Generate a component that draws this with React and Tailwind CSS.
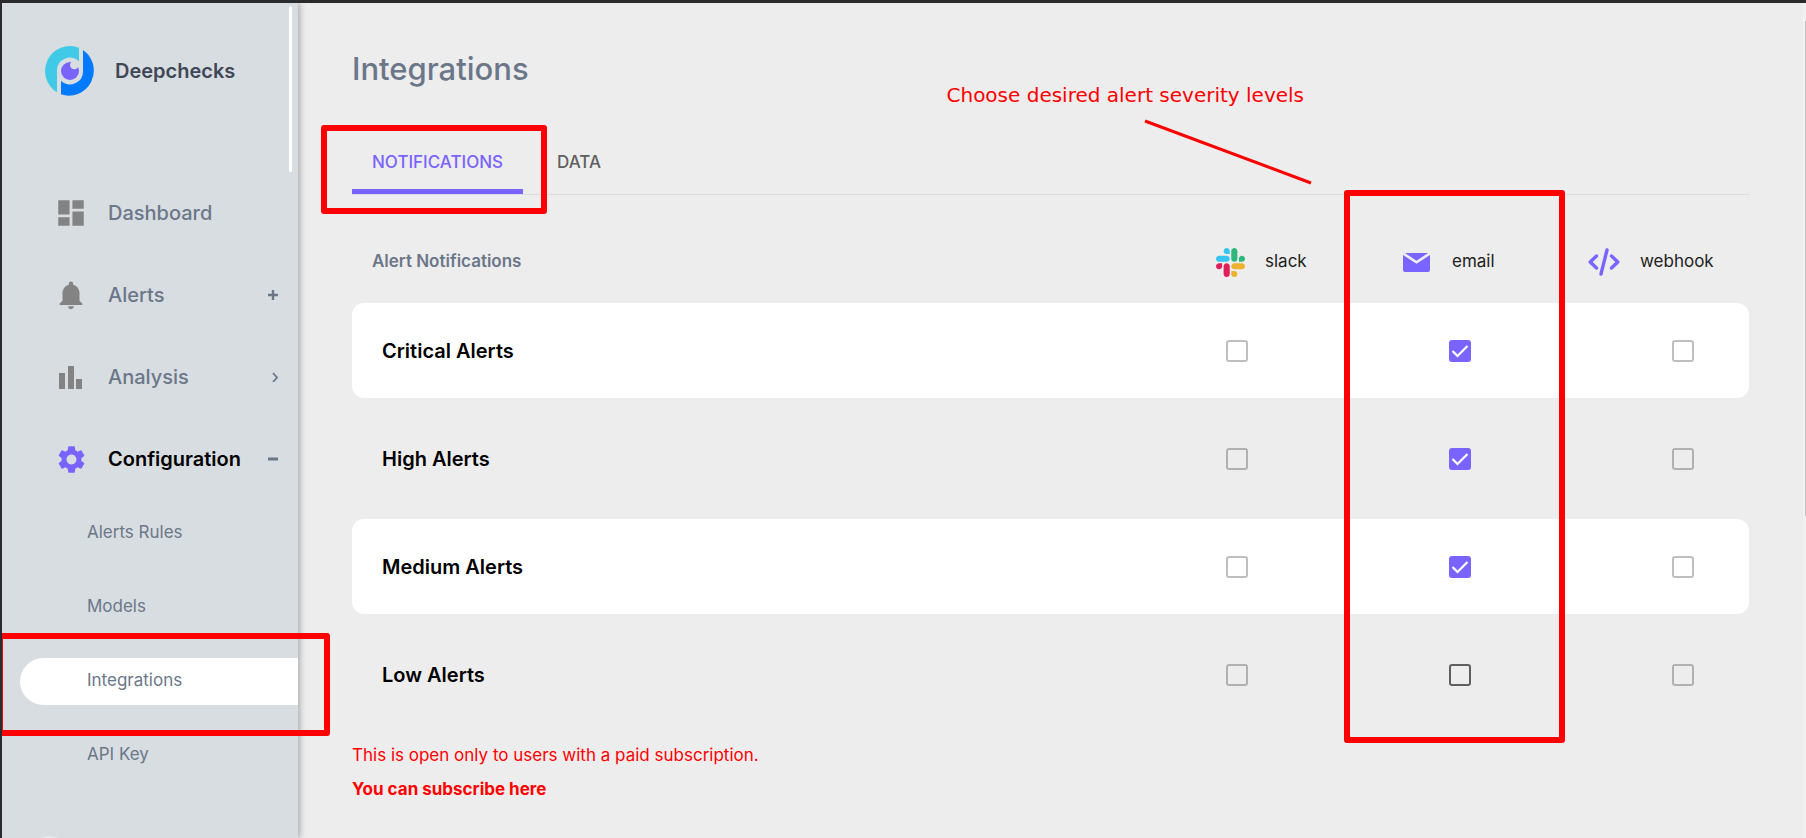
import { useState } from "react";
import { MdDashboard, MdNotifications, MdSettings } from "react-icons/md";

function Logo() {
  return (
    <svg viewBox="0 0 150 150" className="size-[50px] shrink-0" aria-hidden="true">
      <path fill="#41cae8" d="M36 139A75 75 0 0 1 102 5V46A39 39 0 0 0 36 75Z" />
      <path fill="#007bff" d="M114 12A75 75 0 0 1 48 145V104A39 39 0 0 0 114 75Z" />
      <circle cx="75" cy="75" r="27" fill="#7964ff" />
      <circle cx="88" cy="57" r="13" fill="#d8dde1" />
    </svg>
  );
}

function BarsIcon() {
  return (
    <svg viewBox="0 0 34 34" className="size-[34px]" fill="currentColor" aria-hidden="true">
      <path d="M5 13h6v16H5zM14 6h6v23h-6zM22 19h6v10h-6z" />
    </svg>
  );
}

function PlusIcon() {
  return (
    <svg viewBox="0 0 10 10" className="size-[10px]" stroke="currentColor" strokeWidth="2.4" aria-hidden="true">
      <path d="M0 5h10M5 0v10" />
    </svg>
  );
}

function MinusIcon() {
  return (
    <svg viewBox="0 0 10 10" className="size-[10px]" stroke="currentColor" strokeWidth="3" aria-hidden="true">
      <path d="M0 5h10" />
    </svg>
  );
}

function ChevronIcon() {
  return (
    <svg viewBox="0 0 10 10" className="size-[10px]" fill="none" stroke="currentColor" strokeWidth="1.8" aria-hidden="true">
      <path d="M5 1l4 4.5L5 10" />
    </svg>
  );
}

function SlackIcon() {
  return (
    <svg viewBox="0 0 122.8 122.8" className="size-[29px]" aria-hidden="true">
      <path fill="#e01e5a" d="M25.8 77.6c0 7.1-5.8 12.9-12.9 12.9S0 84.7 0 77.6s5.8-12.9 12.9-12.9h12.9v12.9zM32.3 77.6c0-7.1 5.8-12.9 12.9-12.9s12.9 5.8 12.9 12.9v32.3c0 7.1-5.8 12.9-12.9 12.9s-12.9-5.8-12.9-12.9V77.6z" />
      <path fill="#36c5f0" d="M45.2 25.8c-7.1 0-12.9-5.8-12.9-12.9S38.1 0 45.2 0s12.9 5.8 12.9 12.9v12.9H45.2zM45.2 32.3c7.1 0 12.9 5.8 12.9 12.9s-5.8 12.9-12.9 12.9H12.9C5.8 58.1 0 52.3 0 45.2s5.8-12.9 12.9-12.9h32.3z" />
      <path fill="#2eb67d" d="M97 45.2c0-7.1 5.8-12.9 12.9-12.9s12.9 5.8 12.9 12.9-5.8 12.9-12.9 12.9H97V45.2zM90.5 45.2c0 7.1-5.8 12.9-12.9 12.9s-12.9-5.8-12.9-12.9V12.9C64.7 5.8 70.5 0 77.6 0s12.9 5.8 12.9 12.9v32.3z" />
      <path fill="#ecb22e" d="M77.6 97c7.1 0 12.9 5.8 12.9 12.9s-5.8 12.9-12.9 12.9-12.9-5.8-12.9-12.9V97h12.9zM77.6 90.5c-7.1 0-12.9-5.8-12.9-12.9s5.8-12.9 12.9-12.9h32.3c7.1 0 12.9 5.8 12.9 12.9s-5.8 12.9-12.9 12.9H77.6z" />
    </svg>
  );
}

function EmailIcon() {
  return (
    <svg viewBox="0 0 27 19" className="h-[19px] w-[27px]" fill="#7964ff" aria-hidden="true">
      <path d="M2 0h23L13.500 7.800z" />
      <path d="M0 2l13.500 8.800L27 2v15a2 2 0 0 1-2 2H2a2 2 0 0 1-2-2z" />
    </svg>
  );
}

function CodeIcon() {
  return (
    <svg viewBox="0 0 32 28" className="h-7 w-8" fill="none" stroke="#7964ff" strokeWidth="3.4" strokeLinecap="round" aria-hidden="true">
      <path d="M19 2L13 26" />
      <path d="M8.500 8L2.200 14l6.300 6M23.500 8l6.300 6-6.300 6" strokeLinejoin="round" />
    </svg>
  );
}

const navItems = [
  { label: "Dashboard", icon: <MdDashboard size={34} /> },
  { label: "Alerts", icon: <MdNotifications size={34} />, mark: <PlusIcon /> },
  { label: "Analysis", icon: <BarsIcon />, mark: <ChevronIcon /> },
  { label: "Configuration", icon: <MdSettings size={33} />, mark: <MinusIcon />, active: true },
];

const subItems = ["Alerts Rules", "Models", "Integrations", "API Key"];

function Sidebar() {
  return (
    <aside className="relative z-10 flex w-[296px] shrink-0 flex-col bg-[#d8dde1] pt-[43px] shadow-[2px_0_6px_rgba(0,0,0,0.28)]">
      <a href="#home" className="flex items-center gap-5 pl-[43px]">
        <Logo />
        <span className="text-xl font-semibold text-[#3f4757]">Deepchecks</span>
      </a>
      <nav className="mt-20" aria-label="Main">
        <ul className="flex flex-col gap-2">
          {navItems.map((item) => (
            <li key={item.label}>
              <button
                type="button"
                aria-expanded={item.mark ? Boolean(item.active) : undefined}
                className={
                  item.active
                    ? "flex h-[74px] w-full items-center pr-5 pl-[52px] text-xl font-semibold text-black"
                    : "flex h-[74px] w-full items-center pr-5 pl-[52px] text-xl font-medium text-[#6b7789]"
                }
              >
                <span className={item.active ? "grid w-[34px] place-items-center text-[#7964ff]" : "grid w-[34px] place-items-center text-[#838383]"}>
                  {item.icon}
                </span>
                <span className="ml-5">{item.label}</span>
                <span className="ml-auto text-[#6b7789]">{item.mark}</span>
              </button>
            </li>
          ))}
        </ul>
        <ul>
          {subItems.map((label) => (
            <li key={label} className="relative flex h-[74px] items-center pl-[18px]">
              <a
                href="#section"
                className={
                  label === "Integrations"
                    ? "flex h-[47px] flex-1 items-center rounded-l-full bg-white pl-[67px] text-[17px] text-[#6b7789]"
                    : "flex h-[47px] flex-1 items-center pl-[67px] text-[17px] text-[#6b7789]"
                }
              >
                {label}
              </a>
              {label === "Integrations" && (
                <span className="pointer-events-none absolute -top-[11px] -right-8 -bottom-[18px] -left-[5px] rounded-[3px] border-6 border-[#ff0000]" />
              )}
            </li>
          ))}
        </ul>
      </nav>
      <span className="mt-11 ml-[29px] size-9 shrink-0 rounded-full bg-[#e6e8ea]" />
      <span className="absolute top-[3px] right-[6px] h-[166px] w-[3px] rounded-full bg-white" />
    </aside>
  );
}

const channels = [
  { id: "slack", icon: <SlackIcon />, head: "flex items-center gap-5 pl-[91px]" },
  { id: "email", icon: <EmailIcon />, head: "flex items-center gap-[22px] pl-[55px]" },
  { id: "webhook", icon: <CodeIcon />, head: "flex items-center gap-5 pl-[17px]" },
];

const levels = ["Critical", "High", "Medium", "Low"];

function AlertCheckbox({ label, checked, disabled, onChange }) {
  return (
    <span className="ml-[101px] grid w-[22px]">
      <input
        type="checkbox"
        aria-label={label}
        checked={checked}
        disabled={disabled}
        onChange={onChange}
        className="col-start-1 row-start-1 size-[22px] appearance-none rounded-[3px] border-2 border-[#5f5f5f] checked:border-[#7964ff] checked:bg-[#7964ff] disabled:border-black/25"
      />
      {checked && (
        <svg viewBox="0 0 22 22" className="pointer-events-none col-start-1 row-start-1 size-[22px]" fill="none" stroke="#fff" strokeWidth="2.200" aria-hidden="true">
          <path d="M3.500 11l5 5L18.500 6" />
        </svg>
      )}
    </span>
  );
}

export default function App() {
  const [email, setEmail] = useState({ Critical: true, High: true, Medium: true, Low: false });

  return (
    <div className="flex h-screen overflow-hidden border-t-3 border-l-2 border-[#2b2b2d] bg-[#ededed] font-['Inter',sans-serif]">
      <Sidebar />
      <main className="relative min-w-0 flex-1 pt-[46px] pr-[57px] pl-[54px]">
        <h1 className="text-[31px] leading-10 font-medium text-[#6b7789]">Integrations</h1>

        <div className="relative mt-12 flex gap-[14px] border-b border-[#dcdcdc]" role="tablist">
          <div className="relative">
            <button type="button" role="tab" aria-selected="true" className="h-[57px] border-b-5 border-[#7964ff] px-5 text-[17px] font-medium text-[#7964ff]">
              NOTIFICATIONS
            </button>
            <span className="pointer-events-none absolute -top-3 -right-6 -bottom-5 -left-[31px] rounded-[3px] border-6 border-[#ff0000]" />
          </div>
          <button type="button" role="tab" aria-selected="false" className="h-[57px] border-b-5 border-transparent px-5 text-[17px] font-medium text-[#5f5f5f]">
            DATA
          </button>
          <div className="pointer-events-none absolute right-[437px] bottom-[9px] flex flex-col items-end">
            <p className="mr-2 font-['DejaVu_Sans',sans-serif] text-xl leading-6 whitespace-nowrap text-[#ff0000]">
              Choose desired alert severity levels
            </p>
            <svg viewBox="0 0 168 66" className="mt-3 h-[66px] w-[168px]" stroke="#ff0000" strokeWidth="3" aria-hidden="true">
              <path d="M1 2L167 64" />
            </svg>
          </div>
        </div>

        <div className="relative mt-[26px]">
          <table className="w-full table-fixed border-separate border-spacing-x-0 border-spacing-y-[13px]">
            <colgroup>
              <col />
              <col className="w-[223px]" />
              <col className="w-[223px]" />
              <col className="w-[178px]" />
            </colgroup>
            <thead>
              <tr className="h-14">
                <th scope="col" className="p-0 pl-5 text-left text-[17px] font-semibold text-[#6b7789]">
                  Alert Notifications
                </th>
                {channels.map((c) => (
                  <th key={c.id} scope="col" className="p-0 text-left text-[17px] font-normal text-[#212121]">
                    <span className={c.head}>
                      {c.icon}
                      {c.id}
                    </span>
                  </th>
                ))}
              </tr>
            </thead>
            <tbody>
              {levels.map((level) => (
                <tr key={level} className="h-[95px] [&:nth-child(odd)>*]:bg-white">
                  <th scope="row" className="rounded-l-xl p-0 pl-[30px] text-left text-xl font-semibold text-black">
                    {level} Alerts
                  </th>
                  {channels.map((c) => (
                    <td key={c.id} className="p-0 last:rounded-r-xl">
                      <AlertCheckbox
                        label={`${level} alerts by ${c.id}`}
                        checked={c.id === "email" && email[level]}
                        disabled={c.id !== "email"}
                        onChange={() => setEmail({ ...email, [level]: !email[level] })}
                      />
                    </td>
                  ))}
                </tr>
              ))}
            </tbody>
          </table>
          <span className="pointer-events-none absolute -top-[31px] right-[184px] -bottom-2 w-[221px] rounded-[3px] border-6 border-[#ff0000]" />
        </div>

        <div className="mt-[3px] text-[17px] leading-[34px] text-[#ff0000]">
          <p>This is open only to users with a paid subscription.</p>
          <a href="#subscribe" className="font-bold">
            You can subscribe here
          </a>
        </div>

        <span className="absolute top-0 right-0 bottom-0 w-[3px] bg-[#f1f1f1]">
          <span className="mt-[18px] ml-[2px] block h-[495px] w-px bg-[#c1c1c1]" />
        </span>
      </main>
    </div>
  );
}
